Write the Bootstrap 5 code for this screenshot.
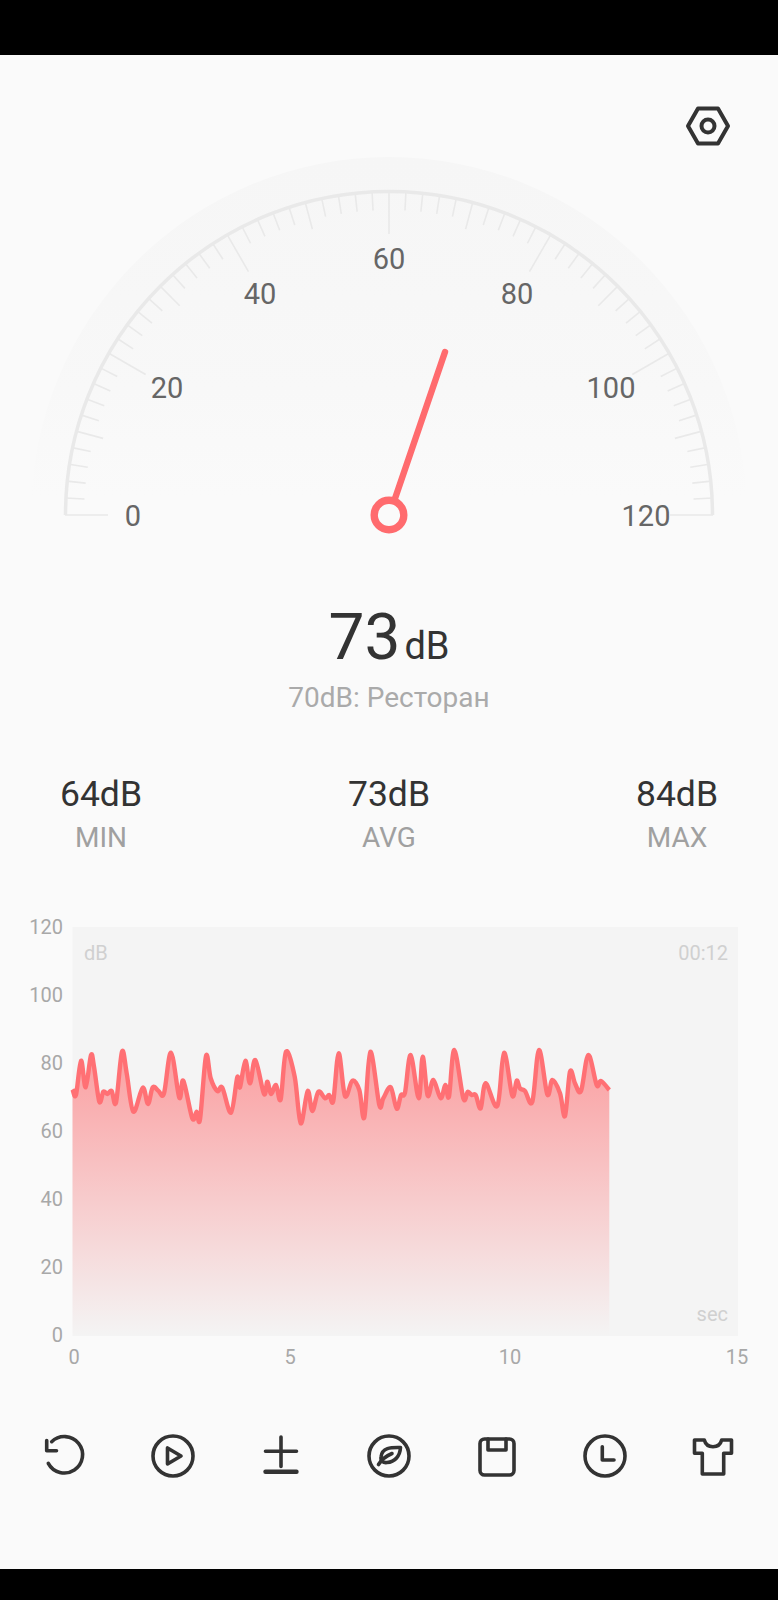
<!DOCTYPE html>
<html lang="ru">
<head>
  <meta charset="UTF-8">
  <title>Шумомер</title>
  <meta name="viewport" content="width=device-width, initial-scale=1">
  <link href="https://cdn.jsdelivr.net/npm/bootstrap@5.3.0/dist/css/bootstrap.min.css" rel="stylesheet">
  <script src="https://cdn.jsdelivr.net/npm/bootstrap@5.3.0/dist/js/bootstrap.bundle.min.js"></script>
  <style>
    body {
      font-family: Roboto, "Liberation Sans", sans-serif;
      background: #000;
      margin: 0;
    }
    .screen-view { background: #fafafa; height: 1514px; margin-top: 55px; margin-bottom: 31px; }
    .settings-row { height: 95px; padding: 47px 46px 0 0; }
    .gauge-svg { display: block; width: 778px; height: 390px; }
    .gauge-label { font-size: 29px; fill: #666; text-anchor: middle; }
    .readout { height: 214px; padding-top: 60px; }
    .readout-big { font-size: 64px; line-height: 75px; color: #333; }
    .readout-unit { font-size: 38px; margin-left: 4px; }
    .readout-sub { font-size: 28px; line-height: 34px; color: #aaa; margin-top: -3px; }
    .stats-row { height: 156px; padding: 18px 43px 0 43px; }
    .stat-item { width: 116px; }
    .stat-value { font-size: 35.500px; line-height: 44px; color: #333; }
    .stat-name { font-size: 28px; line-height: 38px; color: #a0a0a0; margin-top: 3px; }
    .chart-svg { display: block; width: 778px; height: 470px; }
    .axis-label { font-size: 20px; fill: #a8a8a8; }
    .plot-note { font-size: 20px; fill: #d0d0d0; }
    .icon-row { padding: 52px 0 0 41px; gap: 60px; }
    .tool-icon { width: 48px; height: 48px; fill: none; stroke: #333; stroke-width: 3.6; stroke-linecap: round; stroke-linejoin: round; flex: none; }
  </style>
</head>
<body>
  <div class="screen-view">
    <div class="settings-row d-flex justify-content-end">
      <svg class="tool-icon" viewBox="0 0 48 48" style="stroke-width:4">
        <path d="M4 24 14 6.500H34L44 24 34 41.500H14Z"/>
        <circle cx="24" cy="24" r="6.500"/>
      </svg>
    </div>

    <svg class="gauge-svg" id="gauge" viewBox="0 150 778 390">
      <defs>
        <linearGradient id="bandFade" x1="0" y1="0" x2="0" y2="1">
          <stop offset="0" stop-color="#f6f6f6"/>
          <stop offset="0.4" stop-color="#f7f7f7"/>
          <stop offset="0.65" stop-color="#f8f8f8"/>
          <stop offset="0.95" stop-color="#fafafa"/>
        </linearGradient>
      </defs>
      <path d="M31 515A358 358 0 0 1 747 515Z" fill="url(#bandFade)"/>
      <g id="ticks" stroke="#e9e9e9" stroke-width="1.600"></g>
      <path d="M65.500 515A323.500 323.500 0 0 1 712.500 515" fill="none" stroke="#e9e9e9" stroke-width="3.500"/>
      <text class="gauge-label" x="133" y="526">0</text>
      <text class="gauge-label" x="167" y="398">20</text>
      <text class="gauge-label" x="260" y="304">40</text>
      <text class="gauge-label" x="389" y="269">60</text>
      <text class="gauge-label" x="517" y="304">80</text>
      <text class="gauge-label" x="611" y="398">100</text>
      <text class="gauge-label" x="646" y="526">120</text>
      <line x1="394.500" y1="500" x2="445" y2="352" stroke="#ff6b6e" stroke-width="6.400" stroke-linecap="round"/>
      <circle cx="389" cy="515" r="14.800" fill="#fafafa" stroke="#ff6b6e" stroke-width="7.400"/>
    </svg>

    <div class="readout text-center">
      <div class="readout-big">73<span class="readout-unit">dB</span></div>
      <div class="readout-sub">70dB: Ресторан</div>
    </div>

    <div class="stats-row d-flex justify-content-between text-center">
      <div class="stat-item"><div class="stat-value">64dB</div><div class="stat-name">MIN</div></div>
      <div class="stat-item"><div class="stat-value">73dB</div><div class="stat-name">AVG</div></div>
      <div class="stat-item"><div class="stat-value">84dB</div><div class="stat-name">MAX</div></div>
    </div>

    <svg class="chart-svg" viewBox="0 910 778 470">
      <defs>
        <linearGradient id="areaFade" gradientUnits="userSpaceOnUse" x1="0" y1="1060" x2="0" y2="1336">
          <stop offset="0" stop-color="#ff6b6e" stop-opacity="0.6"/>
          <stop offset="1" stop-color="#ff6b6e" stop-opacity="0"/>
        </linearGradient>
      </defs>
      <rect x="72.500" y="927" width="665.500" height="409" fill="#f4f4f4"/>
      <path id="area" fill="url(#areaFade)"/>
      <path id="line" fill="none" stroke="#ff7074" stroke-width="4.400" stroke-linejoin="round"/>
      <g class="axis-label" text-anchor="end">
        <text x="63" y="934">120</text>
        <text x="63" y="1002">100</text>
        <text x="63" y="1070">80</text>
        <text x="63" y="1138">60</text>
        <text x="63" y="1206">40</text>
        <text x="63" y="1274">20</text>
        <text x="63" y="1342">0</text>
      </g>
      <g class="axis-label" text-anchor="middle">
        <text x="74" y="1364">0</text>
        <text x="290" y="1364">5</text>
        <text x="510" y="1364">10</text>
        <text x="737" y="1364">15</text>
      </g>
      <text class="plot-note" x="84" y="960">dB</text>
      <text class="plot-note" x="728" y="960" text-anchor="end">00:12</text>
      <text class="plot-note" x="728" y="1321" text-anchor="end">sec</text>
    </svg>

    <div class="icon-row d-flex">
      <svg class="tool-icon" viewBox="0 0 48 48">
        <path d="M7.300 31.300A18.200 18.200 0 1 0 10.700 9.700"/>
        <path d="M5.700 8.500V18.700H15.500"/>
      </svg>
      <svg class="tool-icon" viewBox="0 0 48 48">
        <circle cx="24" cy="24" r="20"/>
        <path d="M18.500 16V32L32 24Z"/>
      </svg>
      <svg class="tool-icon" viewBox="0 0 48 48">
        <path d="M24 5V34.500M8.500 19.300H39.500"/>
        <path d="M8.500 39.700H39.500" stroke-width="4.400"/>
      </svg>
      <svg class="tool-icon" viewBox="0 0 48 48">
        <circle cx="24" cy="24" r="20"/>
        <path d="M35.500 15.500C28 15.500 17 14.500 16 25 15.500 29 18 31 22 30.500 30 30 35 24 35.500 15.500Z"/>
        <path d="M13.500 32.500C17 27 21 24 27 21.500"/>
      </svg>
      <svg class="tool-icon" viewBox="0 0 48 48">
        <rect x="7" y="7" width="34" height="36" rx="4.500"/>
        <path d="M15 7V18H33V7"/>
      </svg>
      <svg class="tool-icon" viewBox="0 0 48 48">
        <circle cx="24" cy="24" r="20"/>
        <path d="M21.300 14.700V28H33"/>
      </svg>
      <svg class="tool-icon" viewBox="0 0 48 48">
        <path d="M5.500 8H15.300C16.500 12.500 20 14.700 24 14.700 28 14.700 31.500 12.500 32.700 8H42.500V21.300H34.700V42H13.300V21.300H5.500Z"/>
      </svg>
    </div>
  </div>

  <script>
    // gauge ticks: one every 2 dB (3 degrees), longer every 10 dB and 20 dB
    function drawTicks() {
      const group = document.getElementById('ticks');
      const cx = 389, cy = 515, r = 324;
      let html = '';
      for (let i = 0; i <= 60; i++) {
        const a = i * 3 * Math.PI / 180;
        const len = i % 10 === 0 ? 43 : i % 5 === 0 ? 28 : 19;
        const c = Math.cos(a), s = Math.sin(a);
        html += `<line x1="${cx - r * c}" y1="${cy - r * s}" x2="${cx - (r - len) * c}" y2="${cy - (r - len) * s}"/>`;
      }
      group.innerHTML = html;
    }

    // trace of the level curve, read from the picture
    const part1 = [[156,178],[168,195],[183,92],[197,172],[213,75],[222,110],[238,215],[250,185],[262,192],[275,183],[288,218],[306,65],[320,130],[340,245],[368,173],[384,222],[398,172],[415,182],[432,190],[453,68],[478,203],[490,152],[517,265],[530,245],[540,268],[558,78],[572,145],[592,183],[607,173],[633,248],[652,142],[660,172],[676,92],[690,160],[706,90],[732,192],[742,155],[753,192],[768,165],[782,208],[798,65],[824,140],[842,280],[863,183],[877,243],[895,185]];
    const part2 = [[15,205],[28,195],[40,212],[56,70],[75,198],[97,152],[118,180],[133,262],[151,65],[178,225],[190,205],[212,172],[230,236],[243,195],[255,188],[272,75],[296,205],[308,80],[323,197],[340,150],[362,205],[376,165],[387,200],[403,60],[430,205],[443,185],[455,195],[467,195],[482,235],[497,160],[532,228],[552,68],[577,197],[590,152],[600,175],[615,183],[637,215],[657,60],[682,193],[697,150],[720,190],[735,258],[750,125],[765,160],[783,183],[805,75],[830,165],[843,153],[868,180]];

    function drawCurve() {
      const pts = part1.map(p => [20 + p[0] / 3, 1030 + p[1] / 3])
        .concat(part2.map(p => [320 + p[0] / 3, 1030 + p[1] / 3]));
      pts[0][0] = 72.5;
      let d = `M${pts[0][0]} ${pts[0][1]}`;
      for (let i = 0; i < pts.length - 1; i++) {
        const p0 = pts[i - 1] || pts[i], p1 = pts[i], p2 = pts[i + 1], p3 = pts[i + 2] || p2;
        const c1 = [p1[0] + (p2[0] - p0[0]) / 6, p1[1] + (p2[1] - p0[1]) / 6];
        const c2 = [p2[0] - (p3[0] - p1[0]) / 6, p2[1] - (p3[1] - p1[1]) / 6];
        d += `C${c1[0].toFixed(1)} ${c1[1].toFixed(1)} ${c2[0].toFixed(1)} ${c2[1].toFixed(1)} ${p2[0].toFixed(1)} ${p2[1].toFixed(1)}`;
      }
      document.getElementById('line').setAttribute('d', d);
      document.getElementById('area').setAttribute('d', `${d}V1336H72.5Z`);
    }

    drawTicks();
    drawCurve();
  </script>
</body>
</html>
